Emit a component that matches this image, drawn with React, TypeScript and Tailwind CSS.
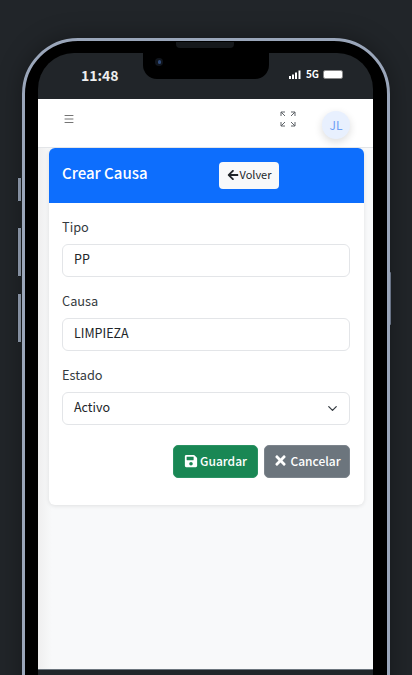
import { ChevronDown, Menu } from 'lucide-react';
import { FaArrowLeft, FaSave, FaTimes } from 'react-icons/fa';

const font = { fontFamily: '"Noto Sans CJK JP", "Noto Sans", sans-serif' };

function Field({ label, value }: { label: string; value: string }) {
  return (
    <div className="mb-[12px]">
      <div className="mb-[5px] h-[24px] text-[12.75px] leading-[24px] text-[#343a40]">{label}</div>
      <div className="flex h-[33px] items-center justify-between rounded-[6px] border border-[#e3e5e8] bg-white pl-[11px] pr-[9px] text-[12.5px] text-[#212529]">
        <span className="pb-[2px]">{value}</span>
        {label === 'Estado' && <ChevronDown size={15} strokeWidth={2} className="text-[#343a40]" />}
      </div>
    </div>
  );
}

function ExpandIcon() {
  return (
    <svg width="16" height="16" viewBox="0 0 16 16" fill="none" stroke="#5f6368" strokeWidth="1">
      <path d="M1 5V1h4M1 1l4 4M11 1h4v4M15 1l-4 4M1 11v4h4M1 15l4-4M11 15h4v-4M15 15l-4-4" />
    </svg>
  );
}

export default function App() {
  return (
    <div style={font} className="relative h-[675px] w-[412px] overflow-hidden bg-[#212529] pl-[22px] pt-[38px]">
      {/* Side buttons */}
      <div className="absolute left-[17px] top-[177px] h-[25px] w-[5px] rounded-l-[1px] border border-[#1c2024] bg-[#9aa6ba]" />
      <div className="absolute left-[17px] top-[227px] h-[50px] w-[5px] rounded-l-[1px] border border-[#1c2024] bg-[#9aa6ba]" />
      <div className="absolute left-[17px] top-[293px] h-[50px] w-[5px] rounded-l-[1px] border border-[#1c2024] bg-[#9aa6ba]" />
      <div className="absolute left-[388px] top-[272px] h-[53px] w-[3px] rounded-r-[1px] bg-[#7d8aa0]" />

      {/* Phone */}
      <div className="relative h-[700px] w-[368px] rounded-[56px] border-[3px] border-[#9aa6ba] bg-black pl-[13px] pr-[14px] pt-[12px] shadow-[0_0_24px_rgba(0,0,0,0.35)]">
        <div className="absolute left-[151px] top-[1px] h-[6px] w-[58px] rounded-b-[4px] bg-[#15181b]" />

        <div className="relative flex h-[616px] w-[335px] flex-col overflow-hidden rounded-t-[36px] bg-[#212529]">
          {/* Notch */}
          <div className="absolute left-[105px] top-0 flex h-[26px] w-[126px] items-start rounded-b-[14px] bg-black pl-[12px] pt-[5px]">
            <div className="flex h-[8px] w-[8px] items-center justify-center rounded-full bg-[#10151d]">
              <div className="h-[4px] w-[3px] rounded-full bg-[#2f4a78]" />
            </div>
          </div>

          {/* Status bar */}
          <div className="flex h-[46px] shrink-0 items-start justify-between pl-[43px] pr-[30px] pt-[13px] text-white">
            <span className="text-[14px] font-bold leading-[18px] text-[#eeeeee]">11:48</span>
            <div className="flex items-center gap-[4px] pt-[2px]">
              <svg width="13" height="9" viewBox="0 0 13 9" fill="white">
                <rect x="0" y="6" width="2" height="3" />
                <rect x="3" y="4.5" width="2" height="4.5" />
                <rect x="6" y="2.5" width="2" height="6.5" />
                <rect x="9.5" y="0.5" width="2" height="8.5" />
              </svg>
              <span className="text-[10px] font-bold leading-[12px]">5G</span>
              <div className="flex h-[9px] w-[20px] items-center rounded-[2px] border border-[#888] p-0">
                <div className="h-full w-full rounded-[1px] bg-white" />
              </div>
            </div>
          </div>

          {/* Screen */}
          <div className="flex min-h-0 flex-1 flex-col bg-[#f8f9fa]">
            <div className="relative flex h-[49px] shrink-0 items-start justify-between border-b border-[#e3e5e8] bg-white pl-[25px] pr-[23px]">
              <Menu size={12} strokeWidth={1.25} className="mt-[14px] text-[#222]" />
              <div className="flex items-start gap-[26px]">
                <div className="mt-[12px]">
                  <ExpandIcon />
                </div>
                <div className="mt-[12px] flex h-[28px] w-[28px] items-center justify-center rounded-full bg-[#e8f0fe] text-[12px] text-[#6ea0f5] shadow-[0_3px_8px_rgba(0,0,0,0.14)]">
                  JL
                </div>
              </div>
            </div>

            <div className="flex-1 bg-[linear-gradient(90deg,#efefef,#f8f9fa_14px)] pl-[11px] pr-[9px]">
              {/* Card */}
              <div className="rounded-[6px] bg-white shadow-[0_1px_4px_rgba(0,0,0,0.1)]">
                <div className="flex h-[55px] items-center rounded-t-[6px] bg-[#0d6efd] pl-[13px]">
                  <span className="w-[157px] pb-[4px] text-[15px] font-medium text-white">Crear Causa</span>
                  <div className="flex h-[27px] w-[60px] items-center justify-center gap-[1px] rounded-[4px] bg-[#f8f9fa] text-[11px] text-[#212529]">
                    <FaArrowLeft size={12} className="mb-[2px]" />
                    <span className="pb-[3px]">Volver</span>
                  </div>
                </div>
                <div className="pb-[27px] pl-[13px] pr-[14px] pt-[12px]">
                  <Field label="Tipo" value="PP" />
                  <Field label="Causa" value="LIMPIEZA" />
                  <Field label="Estado" value="Activo" />
                  <div className="mt-[20px] flex justify-end gap-[6px]">
                    <div className="flex h-[33px] w-[85px] items-center justify-center gap-[2px] rounded-[5px] border border-[#2a9263] bg-[#198754] text-[12px] font-medium text-white">
                      <FaSave size={14} className="mb-[2px]" />
                      <span className="pb-[2px]">Guardar</span>
                    </div>
                    <div className="flex h-[33px] w-[86px] items-center justify-center gap-[2px] rounded-[5px] border border-[#7c848c] bg-[#6c757d] text-[12px] font-medium text-white">
                      <FaTimes size={15} className="mb-[2px]" />
                      <span className="pb-[2px]">Cancelar</span>
                    </div>
                  </div>
                </div>
              </div>
            </div>
          </div>
        </div>
        <div className="h-[1px] w-[335px] bg-[#6c757d]" />
        <div className="h-[6px] w-[335px] bg-[#212529]" />
      </div>
    </div>
  );
}
